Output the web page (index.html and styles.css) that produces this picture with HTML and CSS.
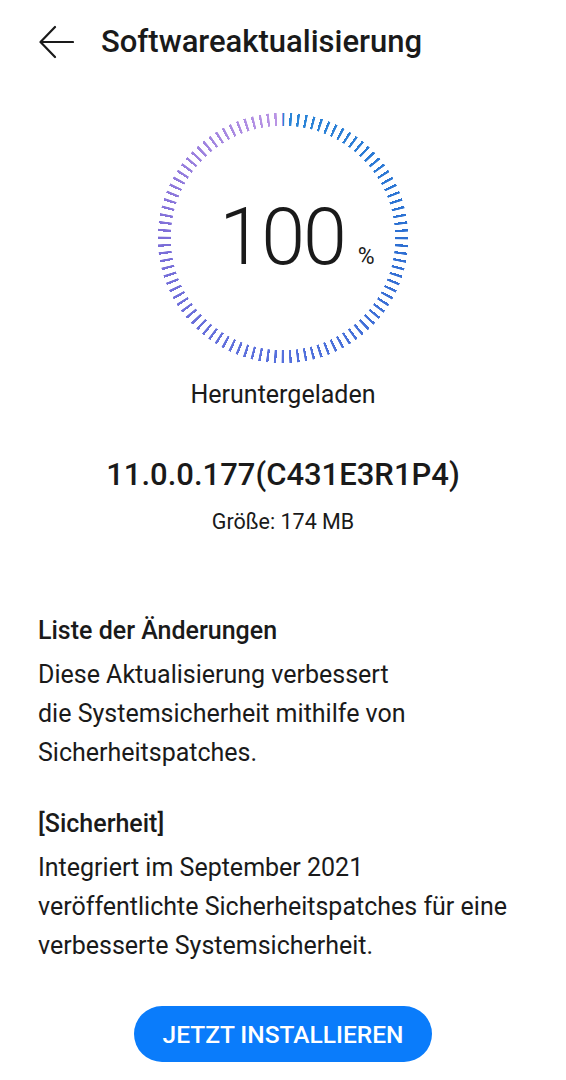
FILE: index.html
```html
<!DOCTYPE html>
<html lang="de">
<head>
<meta charset="utf-8">
<title>Softwareaktualisierung</title>
<link rel="stylesheet" href="styles.css">
</head>
<body>
<header class="header">
  <svg class="back" width="36" height="36" viewBox="0 0 36 36" aria-hidden="true">
    <path d="M35 18H3M17 3L2.5 18L17 33" fill="none" stroke="#1a1a1a" stroke-width="2.2" stroke-linecap="round" stroke-linejoin="round"/>
  </svg>
  <h1 class="title">Softwareaktualisierung</h1>
</header>

<main class="main">
  <div class="gauge">
    <div class="ring"><div class="ring-fill"></div></div>
    <div class="value"><span class="num">100</span><span class="pct">%</span></div>
  </div>
  <p class="status">Heruntergeladen</p>
  <p class="version">11.0.0.177(C431E3R1P4)</p>
  <p class="size">Größe: 174 MB</p>

  <section class="notes">
    <h2 class="notes-title">Liste der Änderungen</h2>
    <p class="notes-text">Diese Aktualisierung verbessert<br>die Systemsicherheit mithilfe von<br>Sicherheitspatches.</p>
    <h2 class="notes-title notes-title-2">[Sicherheit]</h2>
    <p class="notes-text">Integriert im September 2021<br>veröffentlichte Sicherheitspatches für eine<br>verbesserte Systemsicherheit.</p>
  </section>

  <div class="actions">
    <button class="install">JETZT INSTALLIEREN</button>
  </div>
</main>
</body>
</html>
```

FILE: styles.css
```css
* { box-sizing: border-box; }
html, body { margin: 0; padding: 0; background: #fff; }
body {
  font-family: Roboto, "Noto Sans", sans-serif;
  color: #1a1a1a;
  width: 566px;
}
p, h1, h2 { margin: 0; font-weight: 400; }

.header {
  display: flex;
  align-items: center;
  height: 84px;
  padding-left: 38px;
}
.back { display: block; flex: none; }
.title {
  margin-left: 27px;
  font-size: 31px;
  font-weight: 500;
  line-height: 36px;
}

.main {
  display: flex;
  flex-direction: column;
  align-items: center;
}

.gauge {
  position: relative;
  width: 252px;
  height: 252px;
  margin-top: 28px;
  display: flex;
  align-items: center;
  justify-content: center;
}
.ring {
  position: absolute;
  inset: 0;
  -webkit-mask: radial-gradient(circle closest-side, transparent 112px, #000 112.5px, #000 125px, transparent 125.5px);
  mask: radial-gradient(circle closest-side, transparent 112px, #000 112.5px, #000 125px, transparent 125.5px);
}
.ring-fill {
  width: 100%;
  height: 100%;
  background: conic-gradient(#2a86d8 0deg, #2c6fd2 90deg, #5570dd 180deg, #7d6ed8 270deg, #bb95e5 360deg);
  -webkit-mask: repeating-conic-gradient(from -0.5deg, #000 0deg 1deg, transparent 1.3deg 3.6deg);
  mask: repeating-conic-gradient(from -0.5deg, #000 0deg 1deg, transparent 1.3deg 3.6deg);
}
.value {
  display: flex;
  align-items: baseline;
  margin-left: 28px;
  margin-top: -2px;
}
.num {
  font-size: 79px;
  font-weight: 300;
  letter-spacing: -2px;
  line-height: 1;
}
.pct {
  font-size: 23px;
  margin-left: 13px;
}

.status {
  margin-top: 16px;
  font-size: 25px;
  line-height: 30px;
}
.version {
  margin-top: 47px;
  font-size: 31px;
  font-weight: 500;
  line-height: 36px;
}
.size {
  margin-top: 16px;
  font-size: 21.5px;
  line-height: 26px;
}

.notes {
  align-self: stretch;
  padding: 0 38px;
  margin-top: 81px;
}
.notes-title {
  font-size: 25px;
  font-weight: 500;
  line-height: 30px;
}
.notes-title-2 { margin-top: 37px; }
.notes-text {
  margin-top: 9px;
  font-size: 25px;
  line-height: 39px;
}

.actions {
  margin-top: 41px;
  display: flex;
  justify-content: center;
}
.install {
  width: 298px;
  height: 56px;
  border: 0;
  border-radius: 28px;
  background: #0a7cfb;
  color: #fff;
  font-family: Roboto, "Noto Sans", sans-serif;
  font-size: 24.5px;
  font-weight: 500;
  padding: 0;
}
```
